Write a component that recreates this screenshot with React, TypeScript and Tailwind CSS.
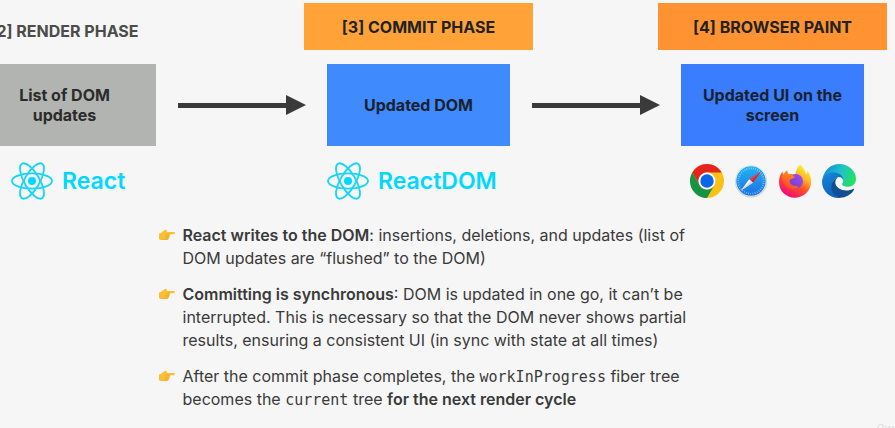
import type { ReactNode } from "react";

function ReactLogo() {
  return (
    <svg viewBox="0 0 42 38" className="h-[38px] w-[42px] shrink-0" fill="none" stroke="#18d5f5" strokeWidth="1.8" aria-hidden="true">
      <circle cx="21" cy="19" r="4" fill="#00d8ff" stroke="none" />
      <ellipse cx="21" cy="19" rx="20" ry="7.6" />
      <ellipse cx="21" cy="19" rx="20" ry="7.6" transform="rotate(60 21 19)" />
      <ellipse cx="21" cy="19" rx="20" ry="7.6" transform="rotate(120 21 19)" />
    </svg>
  );
}

function Arrow() {
  return (
    <div className="mr-[21px] ml-[22px] flex flex-1 items-center" aria-hidden="true">
      <div className="h-[5px] flex-1 bg-[#3a3a3a]" />
      <svg viewBox="0 0 20 20" className="size-5" fill="#3a3a3a">
        <path d="M0 0L20 10L0 20Z" />
      </svg>
    </div>
  );
}

function Chrome() {
  return (
    <svg viewBox="0 0 34 34" className="size-[34px]" role="img" aria-label="Chrome">
      <circle cx="17" cy="17" r="17" fill="#fbc116" />
      <path d="M2.3 8.5A17 17 0 0 1 31.7 8.5H17A8.5 8.5 0 0 0 9.6 21.2Z" fill="#e5231f" />
      <path d="M2.3 8.5L9.6 21.2A8.5 8.5 0 0 0 24.4 21.2L17 34A17 17 0 0 1 2.3 8.5Z" fill="#159447" />
      <circle cx="17" cy="17" r="8.5" fill="#fff" />
      <circle cx="17" cy="17" r="6.7" fill="#0866e8" />
    </svg>
  );
}

function Safari() {
  return (
    <svg viewBox="0 0 34 34" className="size-[34px]" role="img" aria-label="Safari">
      <defs>
        <linearGradient id="safari" x1="0" y1="0" x2="0" y2="1">
          <stop offset="0" stopColor="#22b5f4" />
          <stop offset="1" stopColor="#1c70df" />
        </linearGradient>
      </defs>
      <circle cx="17" cy="17.5" r="16" fill="#c5c9cd" />
      <circle cx="17" cy="17" r="15.5" fill="#e9eef1" />
      <circle cx="17" cy="17" r="14.7" fill="url(#safari)" />
      <circle cx="17" cy="17" r="12.7" fill="none" stroke="#a9dcff" strokeWidth="1.8" strokeDasharray=".6 1.6" />
      <path d="M27 7.5L15.2 15.2L18.8 18.8Z" fill="#f13c3c" />
      <path d="M27 7.5L18.8 18.8L17 17Z" fill="#c9293a" />
      <path d="M7 26.5L15.2 15.2L18.8 18.8Z" fill="#fff" />
      <path d="M7 26.5L18.8 18.8L17 17Z" fill="#cbd6df" />
    </svg>
  );
}

function Firefox() {
  return (
    <svg viewBox="0 0 34 34" className="size-[34px]" role="img" aria-label="Firefox">
      <defs>
        <linearGradient id="fox" x1=".8" y1=".05" x2=".25" y2=".95">
          <stop offset="0" stopColor="#fff136" />
          <stop offset=".3" stopColor="#ffb923" />
          <stop offset=".58" stopColor="#ff5028" />
          <stop offset="1" stopColor="#f5087a" />
        </linearGradient>
        <linearGradient id="foxHead" x1=".8" y1="0" x2=".3" y2="1">
          <stop offset="0" stopColor="#ff9c1c" />
          <stop offset="1" stopColor="#ff4528" />
        </linearGradient>
        <linearGradient id="globe" x1="1" y1="0" x2="0" y2="1">
          <stop offset="0" stopColor="#a64bf3" />
          <stop offset="1" stopColor="#6a3fc4" />
        </linearGradient>
      </defs>
      <path d="M22 .5C26 4 27.5 7.5 28 10.5C29.2 9.5 29.5 8 29.3 7C33 11 34 17 32.5 22C30.5 29 24 33.7 17 33.7C8 33.7 1 27 1 18C1 13.8 2.4 10 4.5 7.5C4.5 9 5 10 5.7 10.7C6.5 8.8 8 7 9.3 6.3C9 8 9.5 9.4 10.5 10.3C13 9.5 15.5 10 17 11C18 7 19 3 22 .5Z" fill="url(#fox)" />
      <circle cx="17.8" cy="17.2" r="7.2" fill="url(#globe)" />
      <path d="M4.5 8C5 10 5.5 10.6 6 10.8C7 8.8 8.2 7.2 9.3 6.3C9 8.3 9.8 9.8 11 10.3C12.5 9.9 13.8 10.3 15 11.4C16 12.3 17 12.5 16.7 13.2C15.7 14.5 13.4 14.4 12.2 15.6C10.6 17.6 12.2 20.6 15 21.4C16.5 22 19 21.6 20.5 22.8C17.5 25.5 13 26 9.5 23.5C5 20 2.5 14.5 4.5 8Z" fill="url(#foxHead)" />
    </svg>
  );
}

function Edge() {
  return (
    <svg viewBox="0 0 34 34" className="size-[34px]" role="img" aria-label="Edge">
      <defs>
        <linearGradient id="edgeTop" x1="0" y1=".3" x2="1" y2=".6">
          <stop offset="0" stopColor="#128cd8" />
          <stop offset=".5" stopColor="#20c1ca" />
          <stop offset="1" stopColor="#25e35c" />
        </linearGradient>
        <linearGradient id="edgeLeft" x1="0" y1="0" x2=".5" y2="1">
          <stop offset="0" stopColor="#1687db" />
          <stop offset="1" stopColor="#0b62ba" />
        </linearGradient>
      </defs>
      <path d="M.5 16C1.5 6.5 8.5 0 17.2 0C27 0 34 7 34 15C34 20 30 22.8 26 22.8C22.5 22.8 20 21.5 20 20.3C20 19.4 21.2 18.8 21.2 16.5C21.2 12.5 17.5 9.5 12 9.5C6.5 9.5 2.5 12.5 .5 16Z" fill="url(#edgeTop)" />
      <path d="M0 17.5C.3 12 5.5 8.5 11.7 8.5C18.5 8.5 21.5 13 21.2 16.2C20.3 14 18.8 13 16.7 13C12 14 8.8 19 10 25C11 30 15.2 33 20 33.7C9 35.5 0 28 0 17.5Z" fill="url(#edgeLeft)" />
      <path d="M16.8 13C11.5 14.5 8.5 19.5 9.3 24.7C10.2 30.5 15.5 34.2 21 33.5C26 32.5 30 29.5 32 25.8C32.3 25 31.7 24.6 31 25C23.5 28.7 13.5 25 13.3 18.5C13.3 16 14.5 14.2 16.8 13Z" fill="#104f91" />
    </svg>
  );
}

function PointingHand() {
  return (
    <svg viewBox="0 0 16 12" className="mt-[5px] h-3 w-4 shrink-0" aria-hidden="true">
      <path d="M0 4.5Q2.5 4 5 1.5Q6.5 .3 7.5 1L8 3H14.5Q16 3.1 16 4.1T14.5 5.2H10.5Q11.4 6.3 10.5 7.2Q10.8 8.4 9.9 9Q9.7 10.6 8 10.8H3.5Q1.5 10.8 0 10Z" fill="#fcbf32" />
      <path d="M7 5.3H10.7M6.5 7.4H10M6.3 9.2H9.4M1 10.2Q5 11 8.5 10.4" fill="none" stroke="#e5a02c" strokeWidth=".6" strokeLinecap="round" />
    </svg>
  );
}

function Box({ className, children }: { className: string; children: ReactNode }) {
  return (
    <div className={`flex h-[82px] w-[183px] shrink-0 items-center justify-center px-4 text-center text-base/5 font-bold ${className}`}>
      {children}
    </div>
  );
}

function Code({ children }: { children: ReactNode }) {
  return <code className="font-['DejaVu_Sans_Mono',monospace] text-[15px]/4">{children}</code>;
}

function Point({ children }: { children: ReactNode }) {
  return (
    <li className="flex gap-2">
      <PointingHand />
      <p>{children}</p>
    </li>
  );
}

export default function App() {
  return (
    <main className="relative min-h-screen overflow-hidden bg-[#f6f6f6] pt-[3px] font-['Inter',sans-serif] text-[#3a3a3a]">
      <section className="-ml-[50px] pr-2">
        <div className="flex justify-between text-base font-bold">
          <h2 className="flex h-[47px] w-[229px] items-center justify-center pt-2 text-[#4c4c4c]">[2] RENDER PHASE</h2>
          <h2 className="flex h-[47px] w-[229px] items-center justify-center bg-[#ffa238] text-[#222]">[3] COMMIT PHASE</h2>
          <h2 className="flex h-[47px] w-[229px] items-center justify-center bg-[#ff9331] text-[#222]">[4] BROWSER PAINT</h2>
        </div>
        <div className="mt-3.5 flex px-[23px]">
          <Box className="bg-[#b2b4b1] text-[#2b2b2b]"><span>List of DOM<br />updates</span></Box>
          <Arrow />
          <Box className="bg-[#3f8bfd] text-[#18222e]">Updated DOM</Box>
          <Arrow />
          <Box className="bg-[#3b7dff] text-[#18222e]">Updated UI on the screen</Box>
        </div>
        <div className="mt-4 flex justify-between px-[23px] text-[23px] font-semibold text-[#00d8ff]">
          <div className="flex w-[183px] items-center gap-[9px] pl-[38px]"><ReactLogo />React</div>
          <div className="flex w-[183px] items-center gap-[9px]"><ReactLogo />ReactDOM</div>
          <div className="flex w-[183px] items-center justify-center gap-2.5"><Chrome /><Safari /><Firefox /><Edge /></div>
        </div>
      </section>
      <ul className="mx-auto mt-6 flex w-[578px] flex-col gap-[13px] text-base/[23px]">
        <Point><strong className="font-semibold">React writes to the DOM</strong>: insertions, deletions, and updates (list of<br />DOM updates are “flushed” to the DOM)</Point>
        <Point><strong className="font-semibold">Committing is synchronous</strong>: DOM is updated in one go, it can’t be<br />interrupted. This is necessary so that the DOM never shows partial<br />results, ensuring a consistent UI (in sync with state at all times)</Point>
        <Point>After the commit phase completes, the <Code>workInProgress</Code> fiber tree<br />becomes the <Code>current</Code> tree <strong className="font-semibold">for the next render cycle</strong></Point>
      </ul>
      <svg viewBox="0 0 18 5" className="absolute right-0 bottom-0 h-[5px] w-[18px]" fill="none" stroke="#dcdcdc" aria-hidden="true">
        <path d="M1 5V3Q3 0 6 2V5M9 5V3M12 5V3.5H14M16 5V3" />
      </svg>
    </main>
  );
}
